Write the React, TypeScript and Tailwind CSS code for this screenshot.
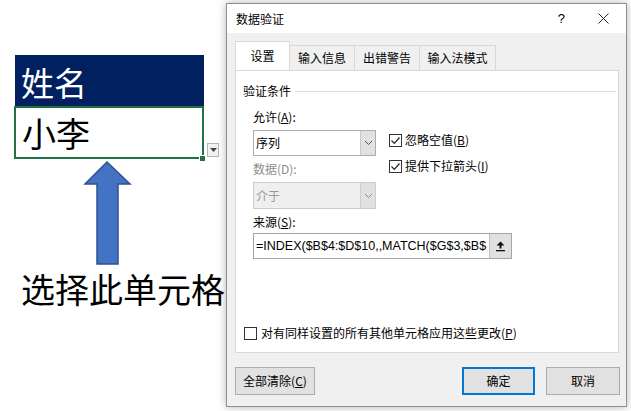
import React from "react";

const cjk = { fontFamily: '"Noto Sans CJK SC", "Noto Sans", sans-serif' };

function Check({ checked }: { checked: boolean }) {
  return (
    <div className="w-[13px] h-[13px] border border-[#333333] bg-white flex items-center justify-center shrink-0">
      {checked && (
        <svg width="11" height="11" viewBox="0 0 11 11">
          <path d="M1.5 5.5 L4.3 8.3 L9.5 2.5" fill="none" stroke="#222" strokeWidth="1.2" />
        </svg>
      )}
    </div>
  );
}

function Chevron({ color = "#555" }: { color?: string }) {
  return (
    <svg width="9" height="6" viewBox="0 0 9 6">
      <path d="M1 1 L4.5 4.5 L8 1" fill="none" stroke={color} strokeWidth="1" />
    </svg>
  );
}

export default function App() {
  return (
    <div className="w-[631px] h-[411px] bg-white relative overflow-hidden flex" style={cjk}>
      {/* Spreadsheet side */}
      <div className="w-[226px] shrink-0 flex flex-col">
        <div className="mt-[55px] ml-[15px] w-[189px] h-[51px] bg-[#002060] text-white text-[33px] leading-none pl-[6px] flex items-center pt-[3px]">
          姓名
        </div>
        <div className="relative ml-[14px] w-[190px] h-[53px] border-2 border-[#217346] bg-white text-black text-[34px] leading-none pl-[6px] flex items-center">
          小李
          <div className="absolute right-[-4px] bottom-[-5px] w-[5px] h-[5px] bg-[#217346] border border-white box-content" />
          <div className="absolute left-[191px] top-[35px] w-[12px] h-[14px] bg-[#f2f2f2] border border-[#b5b5b5] flex items-center justify-center">
            <svg width="7" height="4" viewBox="0 0 7 4">
              <path d="M0 0 L7 0 L3.5 4 Z" fill="#444" />
            </svg>
          </div>
        </div>
        <svg className="ml-[83px] mt-[1px]" width="50" height="106" viewBox="0 0 50 106">
          <polygon
            points="24,2 47,24 35,24 35,104 14,104 14,24 2,24"
            fill="#4472C4"
            stroke="#2F528F"
            strokeWidth="1.5"
          />
        </svg>
        <div className="ml-[21px] mt-[6px] text-[34px] leading-none text-black whitespace-nowrap">选择此单元格</div>
      </div>

      {/* Dialog */}
      <div className="absolute left-[226px] top-[3px] w-[401px] h-[404px] border border-[#8f8f8f] bg-[#f0f0f0] shadow-[0_0_8px_rgba(0,0,0,0.3)] flex flex-col text-[12px] text-black">
        {/* title */}
        <div className="h-[29px] bg-white flex items-center shrink-0">
          <span className="ml-[9px] leading-none">数据验证</span>
          <span className="ml-auto mr-[33px] text-[13px] leading-none" style={{ fontFamily: '"Liberation Sans", sans-serif' }}>?</span>
          <svg className="mr-[17px]" width="11" height="11" viewBox="0 0 11 11">
            <path d="M0.5 0.5 L10.5 10.5 M10.5 0.5 L0.5 10.5" stroke="#222" strokeWidth="1" />
          </svg>
        </div>
        {/* tabs */}
        <div className="mt-[9px] ml-[8px] flex items-end h-[28px] shrink-0 relative z-10">
          <div className="w-[55px] h-[29px] bg-white border border-b-0 border-[#d9d9d9] flex items-center justify-center">设置</div>
          <div className="w-[65px] h-[25px] border border-l-0 border-b-0 border-[#d9d9d9] flex items-center justify-center">输入信息</div>
          <div className="w-[65px] h-[25px] border border-l-0 border-b-0 border-[#d9d9d9] flex items-center justify-center">出错警告</div>
          <div className="w-[76px] h-[25px] border border-l-0 border-b-0 border-[#d9d9d9] flex items-center justify-center">输入法模式</div>
        </div>
        {/* panel */}
        <div className="ml-[8px] w-[384px] h-[283px] bg-white border border-[#d9d9d9] flex flex-col shrink-0">
          <div className="mt-[13px] ml-[7px] mr-[2px] flex items-center h-[14px]">
            <span className="leading-none">验证条件</span>
            <div className="flex-1 h-px bg-[#dcdcdc] ml-[4px]" />
          </div>
          <div className="ml-[17px] mt-[12px] h-[14px] leading-[14px]">
            允许(<span className="underline">A</span>):
          </div>
          <div className="ml-[17px] mt-[6px] flex items-start">
            <div className="flex flex-col">
              <div className="w-[123px] h-[26px] border border-[#adadad] bg-white flex">
                <span className="flex-1 pl-[2px] flex items-center leading-none">序列</span>
                <div className="w-[15px] bg-[#e1e1e1] border-l border-[#c8c8c8] flex items-center justify-center">
                  <Chevron />
                </div>
              </div>
              <div className="mt-[6px] h-[14px] leading-[14px] text-[#8d8d8d]">数据(D):</div>
            </div>
            <div className="ml-[13px] pt-[3px] flex flex-col gap-[12px]">
              <div className="flex items-center h-[14px]">
                <Check checked />
                <span className="ml-[3px] leading-none">
                  忽略空值(<span className="underline">B</span>)
                </span>
              </div>
              <div className="flex items-center h-[14px]">
                <Check checked />
                <span className="ml-[3px] leading-none">
                  提供下拉箭头(<span className="underline">I</span>)
                </span>
              </div>
            </div>
          </div>
          <div className="ml-[17px] mt-[6px] w-[123px] h-[27px] border border-[#cccccc] bg-[#efefef] flex">
            <span className="flex-1 pl-[2px] flex items-center leading-none text-[#9a9a9a]">介于</span>
            <div className="w-[15px] bg-[#e1e1e1] border-l border-[#cccccc] flex items-center justify-center">
              <Chevron color="#888" />
            </div>
          </div>
          <div className="ml-[17px] mt-[6px] h-[14px] leading-[14px]">
            来源(<span className="underline">S</span>):
          </div>
          <div className="ml-[17px] mt-[4px] w-[259px] h-[26px] border border-[#a5a5a5] bg-white flex">
            <div
              className="flex-1 overflow-hidden whitespace-nowrap pl-[2px] flex items-center text-[12.5px]"
              style={{ fontFamily: '"Liberation Sans", sans-serif' }}
            >
              =INDEX($B$4:$D$10,,MATCH($G$3,$B$
            </div>
            <div className="w-[22px] bg-[#e1e1e1] border-l border-[#c0c0c0] flex items-center justify-center">
              <svg width="9" height="11" viewBox="0 0 9 11">
                <path d="M4.5 0.5 L8.5 4.5 L5.5 4.5 L5.5 7.5 L3.5 7.5 L3.5 4.5 L0.5 4.5 Z" fill="#111" />
                <rect x="0" y="9" width="9" height="1.3" fill="#111" />
              </svg>
            </div>
          </div>
          <div className="mt-auto mb-[12px] ml-[8px] flex items-center h-[14px]">
            <Check checked={false} />
            <span className="ml-[4px] leading-none">
              对有同样设置的所有其他单元格应用这些更改(<span className="underline">P</span>)
            </span>
          </div>
        </div>
        {/* buttons */}
        <div className="mt-[14px] ml-[8px] mr-[6px] flex h-[28px] shrink-0">
          <div className="w-[80px] h-[28px] bg-[#e1e1e1] border border-[#adadad] flex items-center justify-center">
            全部清除(<span className="underline">C</span>)
          </div>
          <div className="ml-auto w-[73px] h-[28px] bg-[#e1e1e1] border-2 border-[#0078d7] flex items-center justify-center">确定</div>
          <div className="ml-[11px] w-[74px] h-[28px] bg-[#e1e1e1] border border-[#adadad] flex items-center justify-center">取消</div>
        </div>
      </div>
    </div>
  );
}
